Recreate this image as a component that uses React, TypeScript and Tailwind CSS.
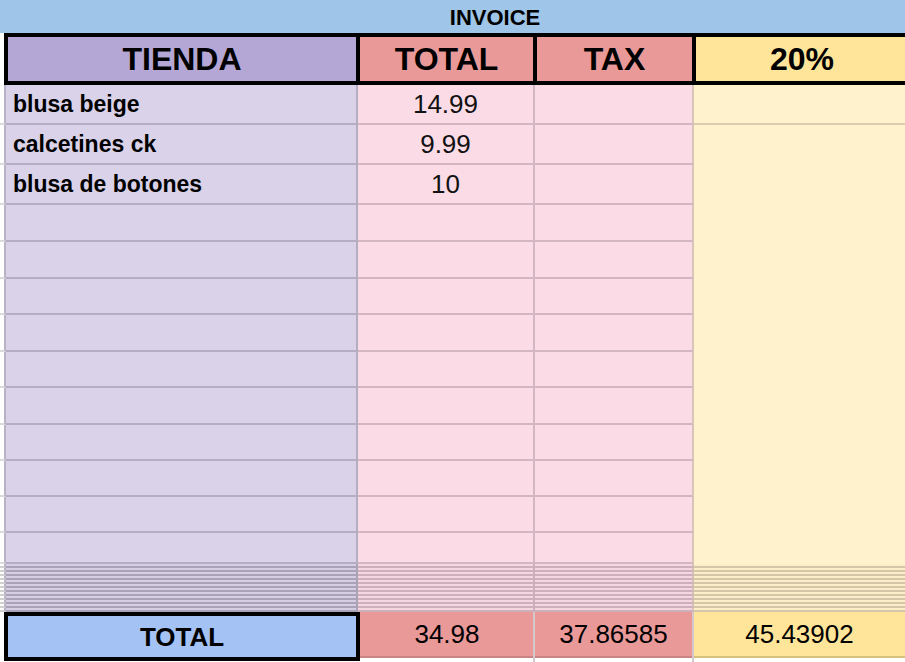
import React from 'react';

interface Item {
    name: string;
    total: string;
}

const items: Item[] = [
    { name: 'blusa beige', total: '14.99' },
    { name: 'calcetines ck', total: '9.99' },
    { name: 'blusa de botones', total: '10' },
];

// heights of the empty rows under the items
const emptyRows = [37, 37, 36, 37, 36, 37, 36, 36, 36, 31];

function BodyRow({ h, name, total, firstRow }: { h: number; name?: string; total?: string; firstRow?: boolean }) {
    return (
        <div className="flex shrink-0" style={{ height: h }}>
            <div className="w-[6px] shrink-0 bg-white border-r-2 border-b-2 border-r-[#b9b1c5] border-b-[#dadada]" />
            <div className="w-[352px] shrink-0 bg-[#d9d2e9] border-r-2 border-b-2 border-[#b5adc1] flex items-center pl-[7px] text-[23px] font-bold text-black">
                {name}
            </div>
            <div className="w-[177px] shrink-0 bg-[#fadbe6] border-r-2 border-b-2 border-[#d2b6c2] flex items-center justify-center text-[26px] text-[#111]">
                {total}
            </div>
            <div className="w-[159px] shrink-0 bg-[#fadbe6] border-r-2 border-b-2 border-r-[#d8c6b8] border-b-[#d2b6c2]" />
            <div className={`flex-1 bg-[#fff2cc] ${firstRow ? 'border-b-2 border-[#dccdb2]' : ''}`} />
        </div>
    );
}

function HatchRow() {
    return (
        <div className="flex h-[4px] shrink-0">
            <div className="w-[6px] shrink-0 bg-white border-r-2 border-b-2 border-r-[#b9b1c5] border-b-[#d0d0d0]" />
            <div className="w-[352px] shrink-0 bg-[#d6cfe4] border-r-2 border-b-2 border-[#aaa2b6]" />
            <div className="w-[177px] shrink-0 bg-[#f6d6e1] border-r-2 border-b-2 border-[#cbb0bc]" />
            <div className="w-[159px] shrink-0 bg-[#f6d6e1] border-r-2 border-b-2 border-r-[#d5c4b5] border-b-[#cbb0bc]" />
            <div className="flex-1 bg-[#fbeec8] border-b-2 border-[#d4c6a6]" />
        </div>
    );
}

export default function App() {
    return (
        <div className="w-[905px] h-[662px] overflow-hidden bg-white flex flex-col font-['Liberation_Sans','Arial',sans-serif] text-black">
            {/* Banner */}
            <div className="h-[33px] shrink-0 bg-[#9fc5e8] flex items-center">
                <div className="ml-[85px] flex-1 text-center text-[22px] font-bold leading-none pt-[2px]">INVOICE</div>
            </div>

            {/* Header */}
            <div className="flex h-[52px] shrink-0">
                <div className="w-[4px] shrink-0 bg-white" />
                <div className="flex bg-black p-[4px] gap-[4px] shrink-0">
                    <div className="w-[348px] shrink-0 bg-[#b4a7d6] flex items-center justify-center text-[32px] font-bold leading-none">TIENDA</div>
                    <div className="w-[173px] shrink-0 bg-[#ea9999] flex items-center justify-center text-[32px] font-bold leading-none">TOTAL</div>
                    <div className="w-[155px] shrink-0 bg-[#ea9999] flex items-center justify-center text-[32px] font-bold leading-none">TAX</div>
                    <div className="w-[212px] shrink-0 bg-[#ffe599] flex items-center justify-center text-[32px] font-bold leading-none">20%</div>
                </div>
            </div>

            {/* Items */}
            {items.map((it, i) => (
                <BodyRow key={it.name} h={40} name={it.name} total={it.total} firstRow={i === 0} />
            ))}
            {emptyRows.map((h, i) => (
                <BodyRow key={i} h={h} />
            ))}

            {/* Collapsed rows */}
            {Array.from({ length: 12 }).map((_, i) => (
                <HatchRow key={i} />
            ))}

            {/* Footer */}
            <div className="flex h-[50px] shrink-0">
                <div className="w-[4px] shrink-0 bg-white" />
                <div className="w-[356px] h-[49px] shrink-0 border-4 border-black bg-[#a4c2f4] flex items-center justify-center text-[26px] font-bold leading-none">
                    TOTAL
                </div>
                <div className="w-[175px] shrink-0 h-full border-r-2 border-[#d3c9cd]">
                    <div className="h-[46px] bg-[#ea9999] border-b-2 border-[#c98585] flex items-center justify-center text-[26px] leading-none pl-[1px]">
                        34.98
                    </div>
                </div>
                <div className="w-[159px] shrink-0 h-full border-r-2 border-[#d3c9cd]">
                    <div className="h-[46px] bg-[#ea9999] border-b-2 border-[#c98585] flex items-center justify-center text-[26px] leading-none">
                        37.86585
                    </div>
                </div>
                <div className="flex-1 h-full">
                    <div className="h-[46px] bg-[#ffe599] border-b-2 border-[#d6c27a] flex items-center justify-center text-[26px] leading-none">
                        45.43902
                    </div>
                </div>
            </div>
        </div>
    );
}
